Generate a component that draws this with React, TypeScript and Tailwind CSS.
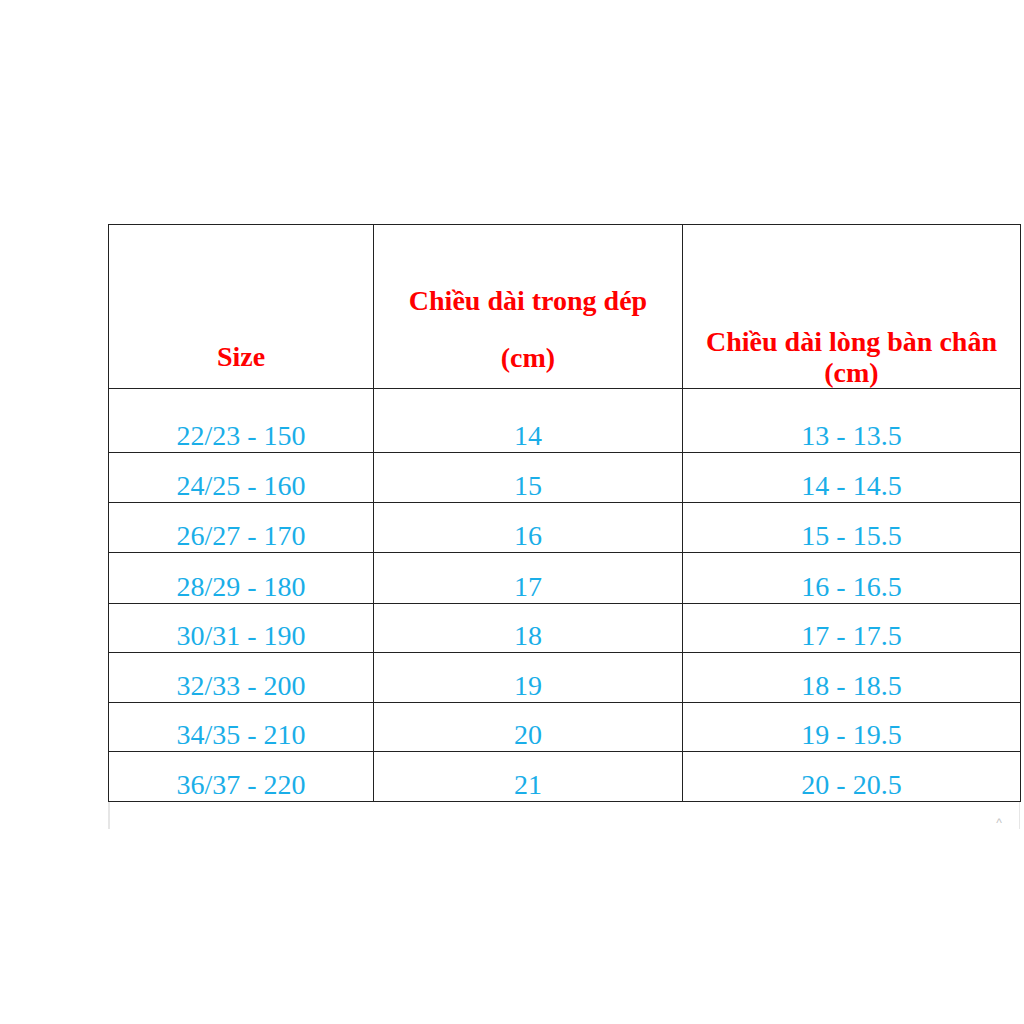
const ROWS = [
  { size: "22/23 - 150", inner: "14", foot: "13 - 13.5", h: "h-[64px]" },
  { size: "24/25 - 160", inner: "15", foot: "14 - 14.5", h: "h-[50px]" },
  { size: "26/27 - 170", inner: "16", foot: "15 - 15.5", h: "h-[50px]" },
  { size: "28/29 - 180", inner: "17", foot: "16 - 16.5", h: "h-[51px]" },
  { size: "30/31 - 190", inner: "18", foot: "17 - 17.5", h: "h-[49px]" },
  { size: "32/33 - 200", inner: "19", foot: "18 - 18.5", h: "h-[50px]" },
  { size: "34/35 - 210", inner: "20", foot: "19 - 19.5", h: "h-[49px]" },
  { size: "36/37 - 220", inner: "21", foot: "20 - 20.5", h: "h-[50px]" },
];

const cell = "border border-[#222] p-0 text-center align-bottom";
const body = "text-[28px] leading-[30px] pb-[1px] text-[#1aaee8]";

export default function App() {
  return (
    <div className="w-[1024px] h-[1024px] bg-white pt-[224px] pl-[108px] font-['Liberation_Serif','Times_New_Roman',serif]">
      <table className="border-collapse table-fixed w-[912px]">
        <colgroup>
          <col className="w-[265px]" />
          <col className="w-[309px]" />
          <col className="w-[338px]" />
        </colgroup>
        <thead>
          <tr className="h-[164px] text-[#ff0000] font-bold text-[28px]">
            <th className={cell}>
              <div className="leading-[32px] pb-[15px]">Size</div>
            </th>
            <th className={cell}>
              <div className="leading-[57px] pb-[2px]">
                Chiều dài trong dép
                <br />
                (cm)
              </div>
            </th>
            <th className={cell}>
              <div className="leading-[31px] pb-0">
                Chiều dài lòng bàn chân
                <br />
                (cm)
              </div>
            </th>
          </tr>
        </thead>
        <tbody>
          {ROWS.map((r) => (
            <tr key={r.size} className={r.h}>
              <td className={cell}>
                <div className={body}>{r.size}</div>
              </td>
              <td className={cell}>
                <div className={body}>{r.inner}</div>
              </td>
              <td className={cell}>
                <div className={body}>{r.foot}</div>
              </td>
            </tr>
          ))}
        </tbody>
      </table>
      {/* faint page edge below the table */}
      <div className="w-[912px] h-[27px] border-l-2 border-r border-[#e6e6e6] flex justify-end items-end pr-[17px]">
        <span className="text-[12px] leading-[12px] text-[#c4c4c4] font-['Liberation_Sans',sans-serif]">^</span>
      </div>
    </div>
  );
}
